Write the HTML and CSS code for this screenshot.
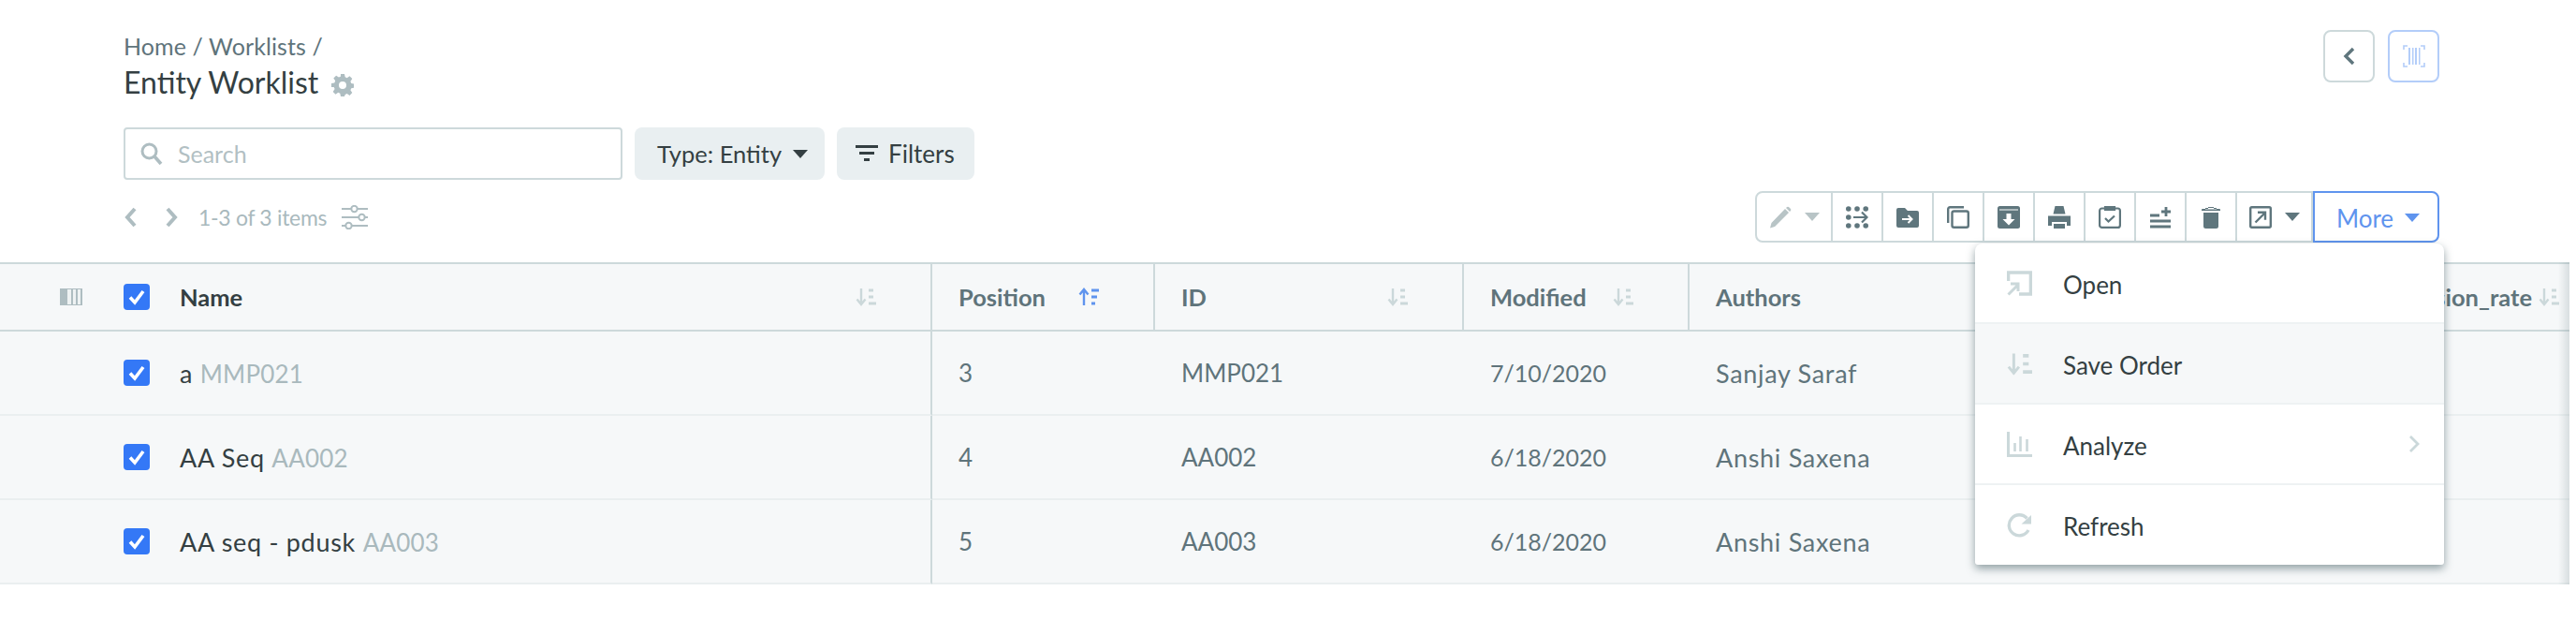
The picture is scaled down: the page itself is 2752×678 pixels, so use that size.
FILE: index.html
```html
<!DOCTYPE html>
<html lang="en">

<head>
    <title>Entity Worklist</title>
    <link rel="stylesheet" href="styles.css">
</head>

<body>
    <svg class="icon-defs" aria-hidden="true">
        <symbol id="i-sort" viewBox="0 0 22 20">
            <path d="M6 1v16M1.5 12.5 6 18l4.500-5.500" fill="none" stroke="currentColor" stroke-width="2.400" />
            <path d="M14 3h5M14 10h5M14 17h8" fill="none" stroke="currentColor" stroke-width="3" />
        </symbol>
        <symbol id="i-sort-up" viewBox="0 0 22 20">
            <path d="M6 19V3M1.500 7.500 6 2l4.500 5.500" fill="none" stroke="currentColor" stroke-width="2.400" />
            <path d="M14 3h8M14 10h6M14 17h4" fill="none" stroke="currentColor" stroke-width="3" />
        </symbol>
        <symbol id="i-check" viewBox="0 0 28 28">
            <rect width="28" height="28" rx="4" fill="#3478f6" />
            <path d="M7 14.500l5 5.500 9-12" fill="none" stroke="#fff" stroke-width="3.600" />
        </symbol>
    </svg>

    <div class="page">
        <div class="top">
            <div>
                <div class="crumbs">Home / Worklists /</div>
                <h1 class="title">Entity Worklist
                    <svg class="gear" viewBox="0 0 24 24">
                        <path fill-rule="evenodd" d="M10 0h4l.7 3.300 2 .9L19.500 2.300l2.800 2.800-1.900 2.800.9 2.100 3.300.6v4l-3.300.7-.9 2 1.900 2.800-2.800 2.800-2.800-1.900-2 .9L14 24h-4l-.7-3.300-2-.9-2.800 1.900-2.800-2.800 1.900-2.800-.9-2L0 14v-4l3.300-.6.900-2.100-1.900-2.800 2.800-2.800 2.800 1.900 2-.9zM12 8a4 4 0 1 0 0 8 4 4 0 0 0 0-8z" />
                    </svg>
                </h1>
            </div>
            <div class="top-btns">
                <button class="square-btn">
                    <svg width="14" height="20" viewBox="0 0 14 20"><path d="M11 2 3 10l8 8" fill="none" stroke="#5f767d" stroke-width="3.400" /></svg>
                </button>
                <button class="square-btn square-btn-blue">
                    <svg width="24" height="24" viewBox="0 0 24 24">
                        <path d="M5 1H1v4M19 1h4v4M5 23H1v-4M19 23h4v-4" fill="none" stroke="#b3cdf9" stroke-width="1.600" />
                        <path d="M6 3h2v18H6zM10 3h1.500v18H10zM13 3h2v18h-2zM17 3h1.500v18H17z" fill="#b3cdf9" />
                    </svg>
                </button>
            </div>
        </div>

        <div class="filter-row">
            <div class="search">
                <svg width="24" height="24" viewBox="0 0 24 24"><circle cx="9.500" cy="9.500" r="7.500" fill="none" stroke="#aebdc1" stroke-width="3" /><path d="M15 15l7 8" stroke="#aebdc1" stroke-width="3.600" /></svg>
                <input type="text" placeholder="Search">
            </div>
            <button class="soft-btn btn-type">Type: Entity <span class="caret caret-dark"></span></button>
            <button class="soft-btn btn-filters">
                <svg width="24" height="18" viewBox="0 0 24 18"><path d="M0 0h24v3H0zM4 7h16v3H4zM9 14h6v3H9z" fill="#343f42" /></svg>
                Filters
            </button>
        </div>

        <div class="tool-row">
            <div class="pager">
                <svg class="pager-arrow" width="16" height="22" viewBox="0 0 16 22"><path d="M12 2 4 11l8 9" fill="none" stroke="#aebdc1" stroke-width="4" /></svg>
                <svg class="pager-arrow" width="16" height="22" viewBox="0 0 16 22"><path d="M4 2l8 9-8 9" fill="none" stroke="#aebdc1" stroke-width="4" /></svg>
                <span class="pager-text">1-3 of 3 items</span>
                <svg width="28" height="26" viewBox="0 0 28 26" fill="none" stroke="#aebdc1" stroke-width="2">
                    <path d="M0 4h10M17 4h11M0 13h18M25 13h3M0 22h4M11 22h17" />
                    <circle cx="13.500" cy="4" r="3.200" /><circle cx="21.500" cy="13" r="3.200" /><circle cx="7.500" cy="22" r="3.200" />
                </svg>
            </div>

            <div class="toolbar">
                <button class="tool tool-wide tool-off">
                    <svg width="24" height="24" viewBox="0 0 24 24"><path d="M17 3l4 4L6 22l-5 1.500L2.500 18zM18.500 1.500a2 2 0 0 1 3 0l1 1a2 2 0 0 1 0 3l-.5.500-4-4z" fill="#b8c4c6" /></svg>
                    <span class="caret caret-off"></span>
                </button>
                <button class="tool">
                    <svg width="24" height="24" viewBox="0 0 24 24" fill="#5f767d">
                        <circle cx="2.800" cy="3" r="2.800" /><circle cx="12" cy="3" r="2.800" /><circle cx="21.200" cy="3" r="2.800" />
                        <circle cx="2.800" cy="12" r="2.800" />
                        <circle cx="2.800" cy="21" r="2.800" /><circle cx="12" cy="21" r="2.800" /><circle cx="21.200" cy="21" r="2.800" />
                        <path d="M8 12h14M17 6.500l5.500 5.500-5.500 5.500" fill="none" stroke="#5f767d" stroke-width="2.200" />
                    </svg>
                </button>
                <button class="tool">
                    <svg width="24" height="24" viewBox="0 0 24 24">
                        <path d="M0 4a2 2 0 0 1 2-2h7l3 3h10a2 2 0 0 1 2 2v14a2 2 0 0 1-2 2H2a2 2 0 0 1-2-2z" fill="#5f767d" />
                        <path d="M6 14h10M12.500 10l4 4-4 4" fill="none" stroke="#fff" stroke-width="2" />
                    </svg>
                </button>
                <button class="tool">
                    <svg width="24" height="24" viewBox="0 0 24 24" fill="none" stroke="#5f767d" stroke-width="2.400">
                        <rect x="5.500" y="5.500" width="17.300" height="17.300" rx="2" />
                        <path d="M1.200 18V3.200a2 2 0 0 1 2-2H18" />
                    </svg>
                </button>
                <button class="tool">
                    <svg width="24" height="24" viewBox="0 0 24 24">
                        <rect width="24" height="24" rx="2.500" fill="#5f767d" />
                        <path d="M2 4h20" stroke="#fff" stroke-width="1" />
                        <path d="M9.500 8h5v6h4l-6.500 6.500L5.500 14h4z" fill="#fff" />
                    </svg>
                </button>
                <button class="tool">
                    <svg width="24" height="24" viewBox="0 0 24 24" fill="#5f767d">
                        <path d="M7.500 0h9l2 8.500h-13zM0 10.500h24V21h-4v-4H4v4H0zM6 19h12v5H6z" />
                        <path d="M6 18.500h12" stroke="#fff" stroke-width="1" />
                    </svg>
                </button>
                <button class="tool">
                    <svg width="24" height="24" viewBox="0 0 24 24" fill="none" stroke="#5f767d" stroke-width="2.200">
                        <rect x="1.100" y="2.500" width="21.800" height="20.400" rx="2.500" />
                        <path d="M7 0.500h10v3.500H7z" fill="#5f767d" />
                        <path d="M7 13l3.500 3.500 6.500-6" />
                    </svg>
                </button>
                <button class="tool">
                    <svg width="24" height="24" viewBox="0 0 24 24" fill="none" stroke="#5f767d" stroke-width="2.800">
                        <path d="M1 10h10M1 16h22M1 22h22M18 1v10M13 6h10" />
                    </svg>
                </button>
                <button class="tool">
                    <svg width="24" height="24" viewBox="0 0 24 24" fill="#5f767d">
                        <path d="M6 3.500h12V2H6zM3 3h18a1 1 0 0 1 1 1v1H2V4a1 1 0 0 1 1-1zM9 1h6v2H9zM4 7h16v14.500a2.500 2.500 0 0 1-2.500 2.500h-11A2.500 2.500 0 0 1 4 21.500z" />
                    </svg>
                </button>
                <button class="tool tool-wide tool-open">
                    <svg width="24" height="24" viewBox="0 0 24 24" fill="none" stroke="#5f767d" stroke-width="2.400">
                        <rect x="1.200" y="1.200" width="21.600" height="21.600" rx="1.500" />
                        <path d="M6.500 17.500l10-10M9 6.800h8v8" />
                    </svg>
                    <span class="caret caret-tool"></span>
                </button>
                <div class="more-wrap">
                    <button class="more-btn">More <span class="caret caret-blue"></span></button>
                    <ul class="menu">
                        <li class="menu-item">
                            <svg class="menu-icon" viewBox="0 0 27 27" fill="none" stroke="#cbd8da">
                                <path d="M1.500 11V2h24v23H13" stroke-width="3.600" />
                                <path d="M1.500 25.500l9.500-9.500M4 14h8v8" stroke-width="3" />
                            </svg>
                            Open
                        </li>
                        <li class="menu-item menu-item-hover">
                            <svg class="menu-icon" viewBox="0 0 22 20"><use href="#i-sort" /></svg>
                            Save Order
                        </li>
                        <li class="menu-item">
                            <svg class="menu-icon" viewBox="0 0 27 27" fill="none" stroke="#cbd8da">
                                <path d="M1.500 0v25.500H27" stroke-width="3" />
                                <path d="M8.500 12v9M14.500 5v16M21.500 8v13" stroke-width="2.600" />
                            </svg>
                            Analyze
                            <svg class="menu-chevron" width="12" height="20" viewBox="0 0 12 20"><path d="M2 2l8 8-8 8" fill="none" stroke="#cbd8da" stroke-width="2.800" /></svg>
                        </li>
                        <li class="menu-item menu-item-last">
                            <svg class="menu-icon" viewBox="0 0 27 27" fill="none" stroke="#cbd8da">
                                <path d="M21.500 6.500A11 11 0 1 0 23 19" stroke-width="3.400" />
                                <path d="M15.500 12.500H26V3z" fill="#cbd8da" stroke="none" />
                            </svg>
                            Refresh
                        </li>
                    </ul>
                </div>
            </div>
        </div>

        <div class="table-wrap">
            <table class="grid">
                <colgroup>
                    <col class="col-name">
                    <col class="col-position">
                    <col class="col-id">
                    <col class="col-modified">
                    <col class="col-authors">
                    <col class="col-rate">
                </colgroup>
                <thead>
                    <tr>
                        <th class="cell-name">
                            <div class="name-box">
                                <svg class="col-toggle" width="24" height="18" viewBox="0 0 24 18">
                                    <rect width="24" height="18" fill="#aebdc1" />
                                    <path d="M8 1h4v16H8zM14 1h3v16h-3zM19 1h3v16h-3z" fill="#eef2f3" />
                                </svg>
                                <svg class="check"><use href="#i-check" /></svg>
                                <span class="th-name">Name</span>
                                <svg class="sort"><use href="#i-sort" /></svg>
                            </div>
                        </th>
                        <th><div class="th-box">Position <svg class="sort sort-on"><use href="#i-sort-up" /></svg></div></th>
                        <th><div class="th-box">ID <svg class="sort"><use href="#i-sort" /></svg></div></th>
                        <th><div class="th-box">Modified <svg class="sort"><use href="#i-sort" /></svg></div></th>
                        <th><div class="th-box">Authors</div></th>
                        <th class="cell-rate"><div class="th-box th-box-end">conversion_rate <svg class="sort"><use href="#i-sort" /></svg></div></th>
                    </tr>
                </thead>
                <tbody>
                    <tr>
                        <td class="cell-name"><div class="name-box"><svg class="check"><use href="#i-check" /></svg><span class="wide-text">a <span class="code">MMP021</span></span></div></td>
                        <td>3</td>
                        <td>MMP021</td>
                        <td class="cell-date">7/10/2020</td>
                        <td class="wide-text">Sanjay Saraf</td>
                        <td></td>
                    </tr>
                    <tr>
                        <td class="cell-name"><div class="name-box"><svg class="check"><use href="#i-check" /></svg><span class="wide-text">AA Seq <span class="code">AA002</span></span></div></td>
                        <td>4</td>
                        <td>AA002</td>
                        <td class="cell-date">6/18/2020</td>
                        <td class="wide-text">Anshi Saxena</td>
                        <td></td>
                    </tr>
                    <tr>
                        <td class="cell-name"><div class="name-box"><svg class="check"><use href="#i-check" /></svg><span class="wide-text">AA seq - pdusk <span class="code">AA003</span></span></div></td>
                        <td>5</td>
                        <td>AA003</td>
                        <td class="cell-date">6/18/2020</td>
                        <td class="wide-text">Anshi Saxena</td>
                        <td></td>
                    </tr>
                </tbody>
            </table>
        </div>
    </div>
</body>

</html>
```

FILE: styles.css
```css
body {
    font-family: Lato, "Liberation Sans", sans-serif;
    font-size: 26px;
    color: #343f42;
    background-color: #fff;
    margin: 0;
    overflow: hidden;
}

button {
    font-family: inherit;
    font-size: inherit;
    color: inherit;
    cursor: pointer;
    padding: 0;
}

.icon-defs {
    display: none;
}

.page {
    width: 2752px;
    height: 678px;
    padding-top: 32px;
    box-sizing: border-box;
}

.top {
    display: flex;
    justify-content: space-between;
    padding: 0 146px 0 132px;
}

.crumbs {
    height: 34px;
    line-height: 34px;
    font-size: 25px;
    letter-spacing: 0.1px;
    color: #5f747b;
}

.title {
    height: 44px;
    line-height: 44px;
    margin: 0;
    font-size: 32px;
    font-weight: 400;
    color: #343f42;
}

.gear {
    width: 24px;
    height: 24px;
    margin-left: 6px;
    vertical-align: -3px;
    fill: #aebdc1;
}

.top-btns {
    display: flex;
    gap: 14px;
}

.square-btn {
    display: flex;
    align-items: center;
    justify-content: center;
    width: 55px;
    height: 56px;
    background-color: #fff;
    border: 2px solid #cdd9db;
    border-radius: 8px;
}

.square-btn-blue {
    border-color: #b3cdf9;
}

.filter-row {
    display: flex;
    gap: 13px;
    margin-top: 26px;
    padding-left: 132px;
}

.search {
    display: flex;
    align-items: center;
    gap: 16px;
    width: 533px;
    height: 56px;
    padding-left: 16px;
    box-sizing: border-box;
    border: 2px solid #cdd9db;
    border-radius: 4px;
}

.search input {
    flex: 1;
    min-width: 0;
    border: none;
    outline: none;
    padding: 0;
    font-family: inherit;
    font-size: 25px;
}

.search input::placeholder {
    color: #b2c0c3;
    opacity: 1;
}

.soft-btn {
    display: flex;
    align-items: center;
    height: 56px;
    border: none;
    border-radius: 8px;
    background-color: #e9eff1;
}

.btn-type {
    gap: 12px;
    width: 203px;
    padding-left: 24px;
    font-size: 25.500px;
}

.btn-filters {
    gap: 11px;
    width: 147px;
    padding-left: 20px;
}

.caret {
    display: inline-block;
    width: 0;
    height: 0;
    border-left: 8px solid transparent;
    border-right: 8px solid transparent;
    border-top: 9px solid #343f42;
}

.caret-off {
    border-top-color: #b8c4c6;
}

.caret-tool {
    border-top-color: #5f767d;
}

.caret-blue {
    border-top-color: #5f94ee;
}

.tool-row {
    display: flex;
    justify-content: space-between;
    align-items: center;
    margin-top: 12px;
    padding: 0 146px 0 132px;
}

.pager {
    display: flex;
    align-items: center;
    color: #a9b9bd;
    font-size: 23px;
    letter-spacing: -0.3px;
}

.pager-arrow {
    margin-right: 27px;
}

.pager-arrow + .pager-arrow {
    margin-right: 21px;
}

.pager-text {
    margin-right: 16px;
}

.toolbar {
    display: flex;
    height: 55px;
}

.tool {
    display: flex;
    align-items: center;
    justify-content: center;
    width: 54px;
    box-sizing: border-box;
    background-color: #fff;
    border: 2px solid #cdd9db;
    border-left: none;
}

.tool-wide {
    gap: 14px;
    width: 81px;
}

.tool-off {
    width: 83px;
    border-left: 2px solid #cdd9db;
    border-radius: 8px 0 0 8px;
}

.more-wrap {
    position: relative;
    width: 135px;
}

.more-btn {
    display: flex;
    align-items: center;
    justify-content: center;
    gap: 12px;
    width: 100%;
    height: 100%;
    color: #5f94ee;
    background-color: #fff;
    border: 2px solid #5f94ee;
    border-radius: 0 8px 8px 0;
    padding: 2px 0 0 4px;
}

.menu {
    position: absolute;
    top: 100%;
    right: -5px;
    z-index: 5;
    width: 501px;
    margin: 1px 0 0;
    padding: 0;
    list-style: none;
    background-color: #fff;
    border-radius: 8px 8px 3px 3px;
    box-shadow: 0 4px 10px rgba(60, 85, 92, 0.55);
}

.menu-item {
    display: flex;
    align-items: center;
    height: 86px;
    box-sizing: border-box;
    padding: 3px 26px 0 34px;
    border-bottom: 2px solid #eef2f3;
}

.menu-item-hover {
    background-color: #f6f8f9;
}

.menu-item-last {
    height: 85px;
    border-bottom: none;
}

.menu-icon {
    width: 27px;
    height: 27px;
    margin-top: -3px;
    margin-right: 33px;
    color: #cbd8da;
}

.menu-chevron {
    margin-top: -3px;
    margin-left: auto;
}

.table-wrap {
    position: relative;
    width: 2745px;
    margin-top: 21px;
}

.table-wrap::after {
    content: "";
    position: absolute;
    top: 0;
    right: 0;
    bottom: 0;
    width: 12px;
    background: linear-gradient(to right, rgba(110, 130, 136, 0), rgba(110, 130, 136, 0.22));
}

.grid {
    width: 2745px;
    table-layout: fixed;
    border-collapse: separate;
    border-spacing: 0;
    background-color: #f6f8f9;
    color: #5f747b;
}

.col-name {
    width: 996px;
}

.col-position {
    width: 238px;
}

.col-id {
    width: 330px;
}

.col-modified {
    width: 241px;
}

.col-authors {
    width: 495px;
}

.grid th {
    height: 74px;
    box-sizing: border-box;
    padding: 0 58px 0 28px;
    text-align: left;
    font-weight: 700;
    font-size: 25.500px;
    border-top: 2px solid #cdd9db;
    border-bottom: 2px solid #cdd9db;
    border-right: 2px solid #cdd9db;
}

.grid td {
    height: 90px;
    box-sizing: border-box;
    padding: 0 28px;
    border-bottom: 2px solid #eaeff0;
}

.grid .cell-name {
    padding: 0 58px 0 64px;
    color: #343f42;
    border-right: 2px solid #cdd9db;
}

.grid th.cell-rate {
    padding-right: 11px;
    border-right: none;
}

.grid .cell-date {
    font-size: 25px;
}

.grid .wide-text {
    font-size: 27px;
    letter-spacing: 0.7px;
}

.th-box {
    display: flex;
    align-items: center;
    justify-content: space-between;
    white-space: nowrap;
}

.th-box-end {
    justify-content: flex-end;
    gap: 7px;
}

.name-box {
    display: flex;
    align-items: center;
    padding-left: 68px;
}

th .name-box {
    padding-left: 0;
}

.col-toggle {
    margin-right: 44px;
}

.check {
    width: 28px;
    height: 28px;
    margin-right: 32px;
}

.th-name {
    margin-right: auto;
}

.sort {
    width: 22px;
    height: 20px;
    color: #cbd8da;
}

.sort-on {
    color: #5f94ee;
}

.code {
    color: #a9b9bd;
    font-size: 26px;
    letter-spacing: 0.2px;
}
```
